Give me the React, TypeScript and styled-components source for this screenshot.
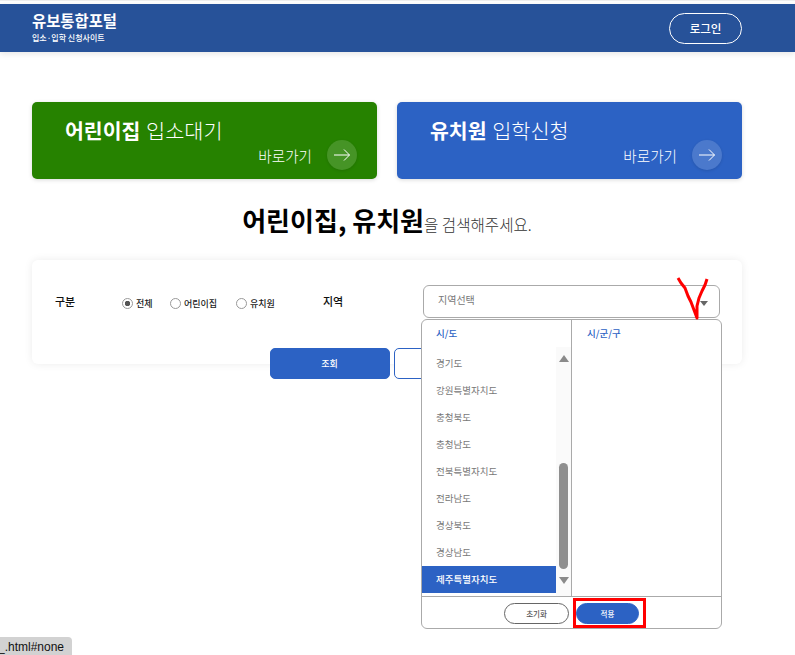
import styled, { createGlobalStyle } from 'styled-components';

const GlobalStyle = createGlobalStyle`
  html, body {
    margin: 0;
    padding: 0;
    background: #fff;
    font-family: "Noto Sans CJK KR", "Noto Sans", sans-serif;
  }
  * { box-sizing: border-box; }
`;

const Page = styled.div`
  position: relative;
  width: 795px;
  height: 655px;
  overflow: hidden;
  padding-top: 4px;
  background: #fff;
  box-shadow: inset 0 1px 0 #eee;
`;

const Header = styled.header`
  height: 48px;
  background: #275299;
  box-shadow: 0 2px 6px rgba(0, 0, 0, 0.1);
  display: flex;
  align-items: center;
  justify-content: space-between;
  padding: 0 53px 0 32px;
`;

const Brand = styled.div`
  display: flex;
  flex-direction: column;
  color: #fff;
  margin-top: -4px;
`;

const BrandTitle = styled.h1`
  margin: 0;
  font-size: 15.4px;
  line-height: 22px;
  font-weight: 700;
`;

const BrandSub = styled.span`
  font-size: 8px;
  line-height: 12px;
  font-weight: 500;
  margin-top: 1px;
`;

const LoginButton = styled.button`
  width: 73px;
  height: 31px;
  border: 1px solid #fff;
  border-radius: 16px;
  background: transparent;
  color: #fff;
  font: 500 11.5px "Noto Sans CJK KR", sans-serif;
`;

const Main = styled.main`
  padding: 50px 53px 0 32px;
`;

const Cards = styled.div`
  display: grid;
  grid-template-columns: 345px 345px;
  gap: 20px;
`;

const Card = styled.a<{ $bg: string }>`
  height: 77px;
  border-radius: 5px;
  background: ${(p) => p.$bg};
  color: #fff;
  padding: 13px 20px 0 33px;
  display: flex;
  flex-direction: column;
  box-shadow: 0 1px 4px rgba(0, 0, 0, 0.15);
`;

const CardTitle = styled.div`
  font-size: 20.8px;
  line-height: 30px;
  font-weight: 300;
  word-spacing: 1px;
  strong { font-weight: 700; font-size: 20.5px; }
`;

const CardLink = styled.div`
  display: flex;
  align-items: center;
  justify-content: flex-end;
  gap: 15px;
  margin-top: -5px;
  font-size: 14.6px;
  font-weight: 300;
`;

const ArrowCircle = styled.span`
  width: 30px;
  height: 30px;
  border-radius: 50%;
  background: rgba(255, 255, 255, 0.15);
  box-shadow: 0 1px 3px rgba(0, 0, 0, 0.12);
  display: flex;
  align-items: center;
  justify-content: center;
`;

const Heading = styled.h2`
  margin: 21px 0 0;
  text-align: center;
  font-size: 26px;
  line-height: 40px;
  font-weight: 700;
  color: #000;
  span {
    font-size: 15.6px;
    font-weight: 300;
    color: #333;
  }
`;

const Panel = styled.section`
  margin-top: 16px;
  height: 104px;
  border-radius: 6px;
  background: #fff;
  box-shadow: 0 0 8px rgba(0, 0, 0, 0.08);
  padding: 25px 22px 0 23px;
`;

const FormRow = styled.div`
  display: flex;
  align-items: flex-start;
`;

const FieldLabel = styled.label<{ $w: number }>`
  width: ${(p) => p.$w}px;
  flex: none;
  font-size: 11px;
  line-height: 33px;
  font-weight: 500;
  color: #111;
`;

const Radios = styled.div`
  width: 201px;
  flex: none;
  display: flex;
  align-items: center;
  height: 33px;
  padding-top: 3px;
`;

const Radio = styled.span<{ $w: number }>`
  width: ${(p) => p.$w}px;
  display: flex;
  align-items: center;
  gap: 3px;
  font-size: 9px;
  font-weight: 500;
  color: #222;
`;

const RadioDot = styled.i<{ $on?: boolean }>`
  width: 11px;
  height: 11px;
  border-radius: 50%;
  border: 1px solid #999;
  background: ${(p) => (p.$on ? 'radial-gradient(circle, #555 0 2.5px, #fff 3px)' : '#fff')};
`;

const SelectBox = styled.div`
  width: 297px;
  height: 33px;
  margin-left: auto;
  border: 1px solid #aaa;
  border-radius: 6px;
  background: #fff;
  color: #777;
  font-size: 10px;
  padding: 0 0 4px 14px;
  display: flex;
  justify-content: space-between;
  align-items: center;
`;

const Caret = styled.b`
  width: 0;
  height: 0;
  margin: 7px 11px 0 0;
  border-left: 4px solid transparent;
  border-right: 4px solid transparent;
  border-top: 5px solid #666;
`;

const Actions = styled.div`
  display: flex;
  justify-content: center;
  gap: 4px;
  margin-top: 30px;
  padding-left: 8px;
`;

const ActionButton = styled.button<{ $primary?: boolean }>`
  width: 120px;
  height: 31px;
  flex: none;
  border-radius: 5px;
  border: 1px solid #2c62c4;
  background: ${(p) => (p.$primary ? '#2c62c4' : '#fff')};
  color: ${(p) => (p.$primary ? '#fff' : '#2c62c4')};
  font: 500 9px "Noto Sans CJK KR", sans-serif;
`;

const Popover = styled.div`
  position: absolute;
  left: 421px;
  top: 319px;
  width: 301px;
  height: 310px;
  border: 1px solid #aaa;
  border-radius: 6px;
  background: #fff;
  display: flex;
  flex-direction: column;
`;

const Columns = styled.div`
  flex: 1;
  min-height: 0;
  display: grid;
  grid-template-columns: 150px 1fr;
  border-bottom: 1px solid #aaa;
`;

const SidoColumn = styled.div`
  border-right: 1px solid #aaa;
  display: flex;
  flex-direction: column;
`;

const ColumnTitle = styled.div<{ $indent: number }>`
  height: 27px;
  flex: none;
  padding-left: ${(p) => p.$indent}px;
  font-size: 9.5px;
  line-height: 26px;
  font-weight: 500;
  color: #2c62c4;
`;

const ListWrap = styled.div`
  display: flex;
  height: 249px;
`;

const List = styled.ul`
  list-style: none;
  margin: 0;
  padding: 3px 0 0;
  flex: 1;
`;

const ListItem = styled.li<{ $active?: boolean }>`
  height: 27px;
  line-height: 27px;
  padding-left: 14px;
  font-size: 9.5px;
  color: ${(p) => (p.$active ? '#fff' : '#777')};
  background: ${(p) => (p.$active ? '#2c62c4' : 'transparent')};
  font-weight: ${(p) => (p.$active ? 500 : 400)};
`;

const ScrollBar = styled.div`
  width: 15px;
  flex: none;
  background: #fafafa;
  display: flex;
  flex-direction: column;
  align-items: center;
  padding: 8px 0 12px;
`;

const ScrollArrow = styled.b<{ $down?: boolean }>`
  width: 0;
  height: 0;
  border-left: 5px solid transparent;
  border-right: 5px solid transparent;
  ${(p) => (p.$down ? 'border-top: 7px solid #8a8a8a;' : 'border-bottom: 7px solid #8a8a8a;')}
`;

const ScrollThumb = styled.div`
  width: 9px;
  height: 106px;
  margin-top: auto;
  margin-bottom: 8px;
  border-radius: 5px;
  background: #8f8f8f;
`;

const PopFooter = styled.div`
  height: 31px;
  flex: none;
  display: flex;
  align-items: center;
  gap: 7px;
  padding: 1px 0 0 82px;
`;

const PopButton = styled.button<{ $primary?: boolean }>`
  height: 21px;
  width: ${(p) => (p.$primary ? 63 : 65)}px;
  border-radius: 11px;
  border: 1px solid ${(p) => (p.$primary ? '#2c62c4' : '#666')};
  background: ${(p) => (p.$primary ? '#2c62c4' : '#fff')};
  color: ${(p) => (p.$primary ? '#fff' : '#555')};
  font: 500 7.5px "Noto Sans CJK KR", sans-serif;
  padding: 0;
`;

const RedBox = styled.div`
  position: absolute;
  left: 573px;
  top: 598px;
  width: 73px;
  height: 30px;
  border: 3px solid #f00;
  pointer-events: none;
`;

const Scribble = styled.svg`
  position: absolute;
  left: 674px;
  top: 274px;
  pointer-events: none;
`;

const StatusTip = styled.div`
  position: absolute;
  left: 0;
  bottom: 0;
  height: 18px;
  width: 72px;
  background: #d2d2d2;
  border-top-right-radius: 4px;
  font: 12px "Liberation Sans", sans-serif;
  line-height: 21px;
  text-indent: -2px;
  white-space: nowrap;
  color: #111;
`;

const regions = ['경기도', '강원특별자치도', '충청북도', '충청남도', '전북특별자치도', '전라남도', '경상북도', '경상남도', '제주특별자치도'];

function Arrow() {
  return (
    <svg width="16" height="12" viewBox="0 0 16 12" fill="none" stroke="#fff" strokeWidth="1">
      <path d="M0 6H15.5M10 .5L15.5 6L10 11.5" />
    </svg>
  );
}

export default function App() {
  return (
    <Page>
      <GlobalStyle />
      <Header>
        <Brand>
          <BrandTitle>유보통합포털</BrandTitle>
          <BrandSub>입소·입학 신청사이트</BrandSub>
        </Brand>
        <LoginButton>로그인</LoginButton>
      </Header>
      <Main>
        <Cards>
          <Card $bg="#268200">
            <CardTitle><strong>어린이집</strong> 입소대기</CardTitle>
            <CardLink>바로가기<ArrowCircle><Arrow /></ArrowCircle></CardLink>
          </Card>
          <Card $bg="#2c62c4">
            <CardTitle><strong>유치원</strong> 입학신청</CardTitle>
            <CardLink>바로가기<ArrowCircle><Arrow /></ArrowCircle></CardLink>
          </Card>
        </Cards>
        <Heading>어린이집, 유치원<span>을 검색해주세요.</span></Heading>
        <Panel>
          <FormRow>
            <FieldLabel $w={67}>구분</FieldLabel>
            <Radios>
              <Radio $w={48}><RadioDot $on />전체</Radio>
              <Radio $w={66}><RadioDot />어린이집</Radio>
              <Radio $w={60}><RadioDot />유치원</Radio>
            </Radios>
            <FieldLabel $w={40}>지역</FieldLabel>
            <SelectBox>지역선택<Caret /></SelectBox>
          </FormRow>
          <Actions>
            <ActionButton $primary>조회</ActionButton>
            <ActionButton>초기화</ActionButton>
          </Actions>
        </Panel>
      </Main>
      <Popover>
        <Columns>
          <SidoColumn>
            <ColumnTitle $indent={14}>시/도</ColumnTitle>
            <ListWrap>
              <List>
                {regions.map((name) => (
                  <ListItem key={name} $active={name === '제주특별자치도'}>{name}</ListItem>
                ))}
              </List>
              <ScrollBar>
                <ScrollArrow />
                <ScrollThumb />
                <ScrollArrow $down />
              </ScrollBar>
            </ListWrap>
          </SidoColumn>
          <ColumnTitle $indent={15}>시/군/구</ColumnTitle>
        </Columns>
        <PopFooter>
          <PopButton>초기화</PopButton>
          <PopButton $primary>적용</PopButton>
        </PopFooter>
      </Popover>
      <RedBox />
      <Scribble width="40" height="48" viewBox="0 0 40 48" fill="none" stroke="#f00" strokeWidth="3" strokeLinejoin="round">
        <path d="M4 4L7 9L11 14L14 22L17 28L23 44L23 32L25 24L28 17L31 11L33 5" />
      </Scribble>
      <StatusTip>_.html#none</StatusTip>
    </Page>
  );
}
